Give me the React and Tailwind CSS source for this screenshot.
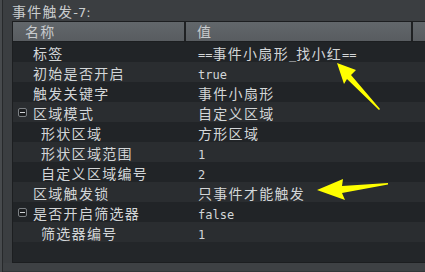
import React from "react";

const CJK = { fontFamily: '"Noto Sans CJK SC", "DejaVu Sans", sans-serif' };

function L({ children }) {
  return (
    <span className="font-['DejaVu_Sans_Mono',monospace] text-[12px] tracking-normal">
      {children}
    </span>
  );
}

function Box() {
  return (
    <span className="absolute left-[5px] top-[6px] w-[9px] h-[9px] rounded-[2px] border border-[#7c8084] bg-[#1b1d1f] flex items-center justify-center">
      <span className="w-[5px] h-[1px] bg-[#d0d3d6]" />
    </span>
  );
}

const rows = [
  { name: "标签", lvl: 0, val: <>
      <L>==</L>事件小扇形<L>_</L>找小红<L>==</L>
    </> },
  { name: "初始是否开启", lvl: 0, val: <L>true</L> },
  { name: "触发关键字", lvl: 0, val: "事件小扇形" },
  { name: "区域模式", lvl: 0, box: true, val: "自定义区域" },
  { name: "形状区域", lvl: 1, val: "方形区域" },
  { name: "形状区域范围", lvl: 1, val: <L>1</L> },
  { name: "自定义区域编号", lvl: 1, val: <L>2</L> },
  { name: "区域触发锁", lvl: 0, val: "只事件才能触发" },
  { name: "是否开启筛选器", lvl: 0, box: true, val: <L>false</L> },
  { name: "筛选器编号", lvl: 1, val: <L>1</L> },
];

export default function App() {
  return (
    <div
      className="relative w-[425px] h-[272px] overflow-hidden bg-[#3b3e41] flex text-[14px] tracking-[1.3px] text-[#d3d6d8]"
      style={CJK}
    >
      <div className="w-[2px] bg-[#474a4d]" />
      <div className="w-[1px] bg-[#27292b]" />
      <div className="flex-1 flex flex-col">
        <div className="h-[21px] pl-[9px] pt-[2px] leading-[18px] text-[#c9ccce]">
          事件触发<span className="font-['DejaVu_Sans',sans-serif] text-[13px] tracking-normal">-7:</span>
        </div>
        <div className="ml-[9px] h-[242px] border-l border-t border-b border-[#1c1e20] bg-[#232629] flex flex-col">
          <div className="h-[20px] flex bg-gradient-to-b from-[#62676b] to-[#585c60] border-b border-[#1c1e20] leading-[19px] text-[#c8cbce]">
            <div className="w-[173px] pl-[12px] border-r-2 border-[#1f2123]">名称</div>
            <div className="w-[227px] pl-[11px] border-r-2 border-[#1f2123]">值</div>
            <div className="flex-1" />
          </div>
          {rows.map((r, i) => (
            <div
              key={i}
              className={`h-[20px] flex leading-[20px] ${i % 2 === 0 ? "bg-[#212427]" : "bg-[#2a2d30]"}`}
            >
              <div
                className={`relative w-[174px] pt-[1px] ${r.lvl === 0 ? "pl-[20px]" : "pl-[28px]"}`}
              >
                {r.box && <Box />}
                {r.name}
              </div>
              <div className="flex-1 pl-[11px] pt-[1px] whitespace-nowrap">{r.val}</div>
            </div>
          ))}
        </div>
        <div className="flex-1 border-b border-[#333639] bg-[#3e4144]" />
      </div>
      <svg className="absolute left-0 top-0" width="425" height="272" viewBox="0 0 425 272">
        <polygon
          fill="#ffff00"
          points="337,63 356,70 351,75 380,109 379,110 347,79 344,84"
        />
        <polygon
          fill="#ffff00"
          points="317,190 343,179 342,186 388,183 388,184.5 342,193 345,200"
        />
      </svg>
    </div>
  );
}
